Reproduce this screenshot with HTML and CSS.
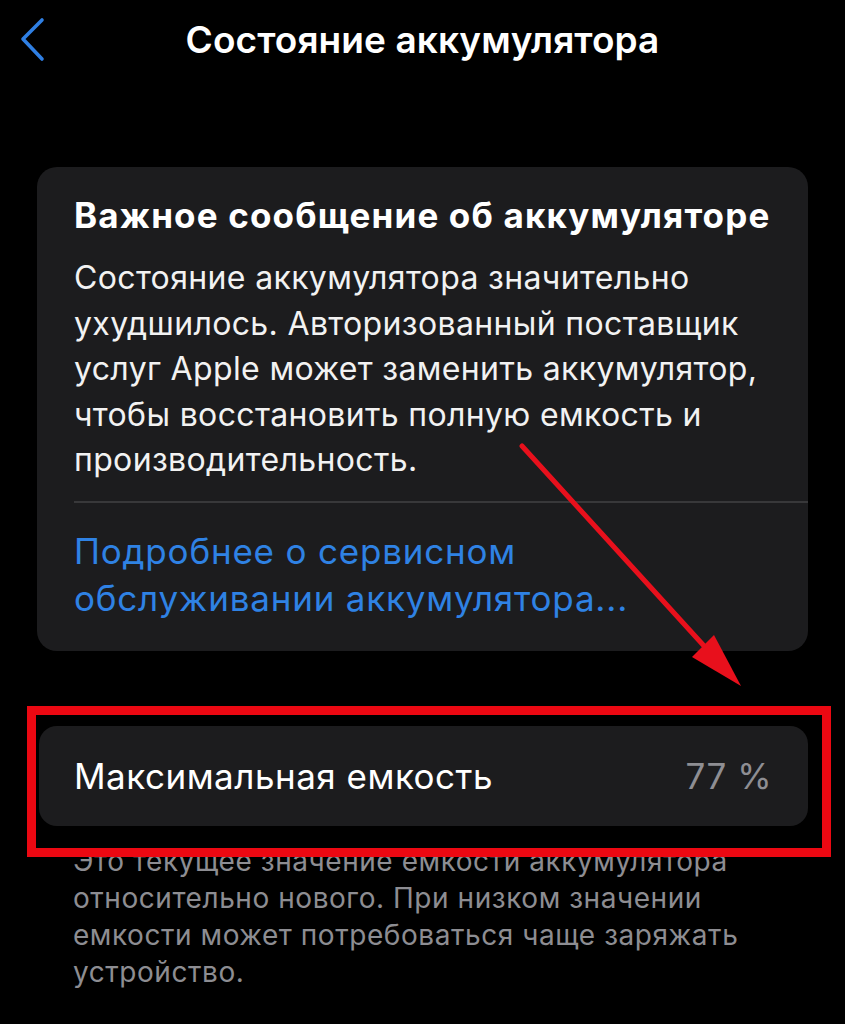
FILE: index.html
```html
<!DOCTYPE html>
<html lang="ru">
<head>
<meta charset="utf-8">
<title>Состояние аккумулятора</title>
<link rel="stylesheet" href="styles.css">
</head>
<body>
<div class="screen">
  <header class="nav">
    <a class="nav-back" href="#" aria-label="Назад">
      <svg width="30" height="48" viewBox="0 0 30 48">
        <path d="M24 3 L5 22 L24 42" fill="none" stroke="#2f7fe3" stroke-width="3.6" stroke-linecap="round" stroke-linejoin="round"/>
      </svg>
    </a>
    <h1 class="nav-title">Состояние аккумулятора</h1>
    <span></span>
  </header>

  <main class="content">
    <section class="card notice">
      <h2 class="notice-title">Важное сообщение об аккумуляторе</h2>
      <p class="notice-text">Состояние аккумулятора значительно<br>ухудшилось. Авторизованный поставщик<br>услуг Apple может заменить аккумулятор,<br>чтобы восстановить полную емкость и<br>производительность.</p>
      <div class="divider"></div>
      <a class="notice-link" href="#">Подробнее о сервисном<br>обслуживании аккумулятора...</a>
    </section>

    <section class="card capacity">
      <span class="capacity-label">Максимальная емкость</span>
      <span class="capacity-value">77 %</span>
    </section>

    <p class="footnote">Это текущее значение емкости аккумулятора<br>относительно нового. При низком значении<br>емкости может потребоваться чаще заряжать<br>устройство.</p>
  </main>

  <div class="mark-box"></div>
  <svg class="mark-arrow" width="845" height="1024" viewBox="0 0 845 1024">
    <line x1="522" y1="446" x2="705" y2="647" stroke="#e8101c" stroke-width="5" stroke-linecap="round"/>
    <polygon points="741,686 692,657 714,635" fill="#e8101c"/>
  </svg>
</div>
</body>
</html>
```
FILE: styles.css
```css
* { box-sizing: border-box; }

html, body {
  margin: 0;
  padding: 0;
  background: #000;
}

.screen {
  position: relative;
  width: 845px;
  height: 1024px;
  overflow: hidden;
  background: #000;
  font-family: Inter, Roboto, "Noto Sans", sans-serif;
  color: #fff;
}

/* top navigation bar */
.nav {
  display: grid;
  grid-template-columns: 1fr auto 1fr;
  align-items: center;
  height: 80px;
  padding: 0 18px;
}

.nav-back {
  display: flex;
  align-items: center;
  justify-self: start;
  padding-top: 2px;
}

.nav-title {
  margin: 0;
  font-size: 37px;
  font-weight: 600;
  letter-spacing: 0.1px;
  line-height: 1;
  padding-bottom: 2px;
}

.content {
  padding: 87px 37px 0 37px;
}

.card {
  background: #1c1c1e;
  border-radius: 20px;
}

/* important message card */
.notice {
  padding: 28px 0 29px 37px;
}

.notice-title {
  margin: 0;
  font-size: 35px;
  font-weight: 700;
  line-height: 40px;
  letter-spacing: 1.15px;
}

.notice-text {
  margin: 20px 0 0;
  font-size: 32px;
  font-weight: 400;
  line-height: 45.5px;
  letter-spacing: 0.35px;
  color: #f2f2f2;
  white-space: nowrap;
}

.divider {
  height: 2px;
  background: #38383a;
  margin: 18px 0 25px;
}

.notice-link {
  display: block;
  font-size: 35px;
  line-height: 47px;
  letter-spacing: 0.8px;
  color: #2f82e4;
  text-decoration: none;
  white-space: nowrap;
}

/* maximum capacity row */
.capacity {
  display: flex;
  justify-content: space-between;
  align-items: center;
  margin: 75px 0 0 2px;
  height: 100px;
  padding: 0 36px 0 35px;
  border-radius: 18px;
  font-size: 35px;
  letter-spacing: 0.5px;
}

.capacity-value {
  color: #8e8e93;
}

.footnote {
  margin: 17px 0 0 36px;
  font-size: 28px;
  line-height: 37px;
  letter-spacing: 0.55px;
  color: #8d8d92;
  white-space: nowrap;
}

/* red annotation frame and arrow drawn over the page */
.mark-box {
  position: absolute;
  left: 27px;
  top: 706px;
  width: 804px;
  height: 151px;
  border: 9px solid #ec0812;
}

.mark-arrow {
  position: absolute;
  left: 0;
  top: 0;
  pointer-events: none;
}
```
